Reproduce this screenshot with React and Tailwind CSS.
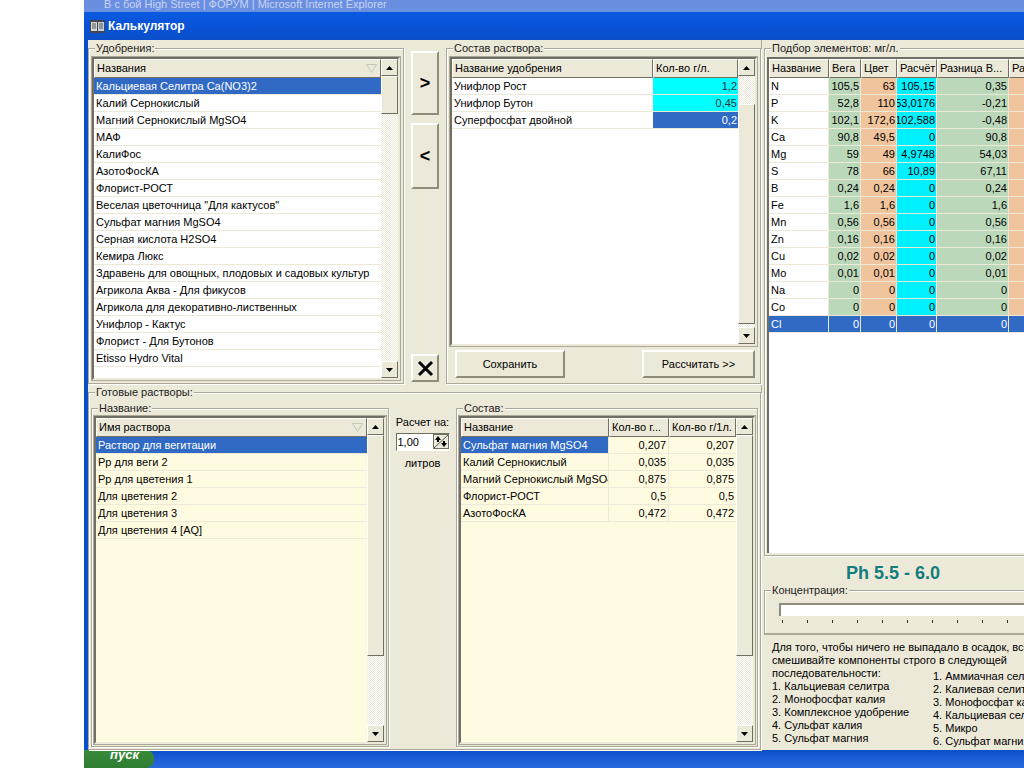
const F = { fontFamily: '"Liberation Sans", Arial, sans-serif' };

const up = (
  <svg width="7" height="4" viewBox="0 0 7 4"><path d="M3.5 0L7 4H0z" fill="#000" /></svg>
);
const down = (
  <svg width="7" height="4" viewBox="0 0 7 4"><path d="M0 0H7L3.5 4z" fill="#000" /></svg>
);

function ArrowBtn({ icon }) {
  return (
    <div className="w-[17px] h-[17px] shrink-0 bg-[#ece9d8] border border-t-white border-l-white border-r-[#716f64] border-b-[#716f64] flex items-center justify-center">
      {icon}
    </div>
  );
}

function Scrollbar({ thumbTop, thumbH, full }) {
  return (
    <div className="w-[17px] shrink-0 flex flex-col bg-[repeating-conic-gradient(#ece9d8_0%_25%,#ffffff_0%_50%)] bg-[length:2px_2px]">
      <ArrowBtn icon={up} />
      <div className="flex-1 min-h-0">
        <div style={{ height: thumbTop }} />
        <div
          style={{ height: thumbH }}
          className="bg-[#ece9d8] border border-t-white border-l-white border-r-[#716f64] border-b-[#716f64]"
        />
      </div>
      <ArrowBtn icon={down} />
    </div>
  );
}

function Group({ title, className, children }) {
  return (
    <div className={"relative border border-[#aca899] shadow-[inset_1px_1px_0_#fff,1px_1px_0_#fff] " + className}>
      <span className="absolute left-[6px] top-[-7px] bg-[#ece9d8] px-[1px] text-[11px] leading-[12px] text-[#222]">
        {title}
      </span>
      {children}
    </div>
  );
}

function Hdr({ children, className = "", sort }) {
  return (
    <div className={"h-[19px] shrink-0 flex items-center justify-between px-[2px] bg-[#ece9d8] border border-t-white border-l-white border-r-[#716f64] border-b-[#716f64] text-[11px] whitespace-nowrap overflow-hidden " + className}>
      <span>{children}</span>
      {sort && (
        <svg width="11" height="9" viewBox="0 0 11 9" className="mr-[1px]">
          <path d="M0.5 0.5H10.5L5.5 8.5z" fill="none" stroke="#c9c6b4" />
        </svg>
      )}
    </div>
  );
}

const fert = [
  "Кальциевая Селитра Ca(NO3)2", "Калий Сернокислый", "Магний Сернокислый MgSO4", "МАФ", "КалиФос", "АзотоФосКА",
  "Флорист-РОСТ", 'Веселая цветочница "Для кактусов"', "Сульфат магния MgSO4", "Серная кислота H2SO4", "Кемира Люкс",
  "Здравень для овощных, плодовых и садовых культур", "Агрикола Аква - Для фикусов", "Агрикола для декоративно-лиственных",
  "Унифлор - Кактус", "Флорист - Для Бутонов", "Etisso Hydro Vital",
];
const recipes = ["Раствор для вегитации", "Рр для веги 2", "Рр для цветения 1", "Для цветения 2", "Для цветения 3", "Для цветения 4 [AQ]"];
const comp = [
  ["Сульфат магния MgSO4", "0,207", "0,207"], ["Калий Сернокислый", "0,035", "0,035"], ["Магний Сернокислый MgSO4", "0,875", "0,875"],
  ["Флорист-РОСТ", "0,5", "0,5"], ["АзотоФосКА", "0,472", "0,472"],
];
const el = [
  ["N", "105,5", "63", "105,15", "0,35"], ["P", "52,8", "110", "53,0176", "-0,21"], ["K", "102,1", "172,6", "102,588", "-0,48"],
  ["Ca", "90,8", "49,5", "0", "90,8"], ["Mg", "59", "49", "4,9748", "54,03"], ["S", "78", "66", "10,89", "67,11"],
  ["B", "0,24", "0,24", "0", "0,24"], ["Fe", "1,6", "1,6", "0", "1,6"], ["Mn", "0,56", "0,56", "0", "0,56"], ["Zn", "0,16", "0,16", "0", "0,16"],
  ["Cu", "0,02", "0,02", "0", "0,02"], ["Mo", "0,01", "0,01", "0", "0,01"], ["Na", "0", "0", "0", "0"], ["Co", "0", "0", "0", "0"], ["Cl", "0", "0", "0", "0"],
];

const Sunken = ({ className = "", children }) => (
  <div className={"flex border-2 border-t-[#716f64] border-l-[#716f64] border-r-[#ece9d8] border-b-[#ece9d8] shadow-[0_0_0_1px_#aca899] overflow-hidden " + className}>
    {children}
  </div>
);

const Raised = ({ className = "", children }) => (
  <div className={"flex items-center justify-center bg-[#ece9d8] border-2 border-t-white border-l-white border-r-[#8f8c7c] border-b-[#8f8c7c] " + className}>
    {children}
  </div>
);

export default function App() {
  return (
    <div style={F} className="w-[1024px] h-[768px] overflow-hidden bg-white flex text-black">
      <div className="w-[84px] shrink-0" />
      <div className="w-[940px] shrink-0 flex flex-col">
        <div className="h-[12px] shrink-0 bg-[#6b8fe0] overflow-hidden text-[11px] leading-[8px] text-[#c8d4f4] pl-[20px] whitespace-nowrap">
          В с бой High Street | ФОРУМ | Microsoft Internet Explorer
        </div>
        <div className="h-[28px] shrink-0 bg-gradient-to-b from-[#0a5be0] via-[#0852d8] to-[#0a4fc8] flex items-center pl-[6px] gap-[3px] text-white font-bold text-[12px]">
          <svg width="15" height="13" viewBox="0 0 15 13">
            <rect width="15" height="13" fill="#44474e" />
            <rect x="1" y="2" width="6" height="9" fill="#d8d8d8" />
            <rect x="8" y="2" width="6" height="9" fill="#c8d0d8" />
            <path d="M2 4h4M2 6h4M2 8h4M9 4h4M9 6h4M9 8h4" stroke="#555" />
          </svg>
          <span>Калькулятор</span>
        </div>
        <div className="flex-1 min-h-0 flex bg-[#ece9d8] border-l-[4px] border-[#0a4fc8]">
          <div className="w-[674px] shrink-0 flex flex-col pt-[8px] border-r border-[#aca899]">
            {/* upper row */}
            <div className="h-[336px] shrink-0 flex">
              <Group title="Удобрения:" className="w-[316px] ml-[0px] shrink-0 p-[3px] pt-[8px] flex">
                <Sunken className="flex-1">
                  <div className="flex-1 min-w-0 bg-white flex flex-col">
                    <Hdr sort className="pl-[2px]">Названия</Hdr>
                    {fert.map((n, i) => (
                      <div key={n} className={"h-[17px] shrink-0 flex items-center pl-[2px] text-[11px] whitespace-nowrap overflow-hidden border-b border-[#ece9d8] " + (i === 0 ? "bg-[#316ac5] text-white" : "")}>
                        {n}
                      </div>
                    ))}
                  </div>
                  <Scrollbar thumbTop={0} thumbH={38} />
                </Sunken>
              </Group>
              <div className="w-[42px] shrink-0 flex flex-col items-center pt-[3px]">
                <Raised className="w-[28px] h-[64px] text-[18px] font-bold">&gt;</Raised>
                <Raised className="w-[28px] h-[66px] mt-[8px] text-[18px] font-bold">&lt;</Raised>
                <div className="flex-1" />
                <Raised className="w-[28px] h-[28px] mb-[2px]">
                  <svg width="17" height="17" viewBox="0 0 17 17"><path d="M2 2L15 15M15 2L2 15" stroke="#000" strokeWidth="3" /></svg>
                </Raised>
              </div>
              <Group title="Состав раствора:" className="flex-1 min-w-0 p-[3px] pt-[8px] flex flex-col">
                <Sunken className="h-[289px] shrink-0">
                  <div className="flex-1 min-w-0 bg-white flex flex-col">
                    <div className="flex shrink-0">
                      <Hdr className="w-[201px]">Название удобрения</Hdr>
                      <Hdr className="flex-1 min-w-0">Кол-во г/л.</Hdr>
                    </div>
                    {[["Унифлор Рост", "1,2"], ["Унифлор Бутон", "0,45"], ["Суперфосфат двойной", "0,2"]].map(([a, b], i) => (
                      <div key={a} className="flex h-[17px] shrink-0 text-[11px] border-b border-[#ece9d8]">
                        <div className="w-[201px] pl-[2px] flex items-center">{a}</div>
                        <div className={"flex-1 flex items-center justify-end pr-[1px] " + (i === 2 ? "bg-[#316ac5] text-white" : "bg-[#00ffff] text-[#333]")}>{b}</div>
                      </div>
                    ))}
                  </div>
                  <Scrollbar thumbTop={28} thumbH={220} />
                </Sunken>
                <div className="flex justify-between mt-[4px] pl-[5px] pr-[2px]">
                  <Raised className="w-[110px] h-[28px] text-[11px]">Сохранить</Raised>
                  <Raised className="w-[113px] h-[28px] text-[11px]">Рассчитать &gt;&gt;</Raised>
                </div>
              </Group>
            </div>
            {/* lower */}
            <Group title="Готовые растворы:" className="h-[358px] mt-[8px] shrink-0 flex px-[2px] pt-[15px] pb-[2px]">
              <Group title="Название:" className="w-[298px] shrink-0 p-[2px] pt-[7px] flex">
                <Sunken className="flex-1">
                  <div className="flex-1 min-w-0 bg-[#fffbe0] flex flex-col">
                    <Hdr sort>Имя раствора</Hdr>
                    {recipes.map((n, i) => (
                      <div key={n} className={"h-[17px] shrink-0 flex items-center pl-[2px] text-[11px] border-b border-[#ece9d8] " + (i === 0 ? "bg-[#316ac5] text-white" : "")}>
                        {n}
                      </div>
                    ))}
                  </div>
                  <Scrollbar thumbTop={0} thumbH={221} />
                </Sunken>
              </Group>
              <div className="w-[67px] shrink-0 flex flex-col items-center pt-[8px] text-[11px]">
                <span className="leading-[13px]">Расчет на:</span>
                <div className="mt-[4px] w-[54px] h-[18px] flex bg-white border border-t-[#716f64] border-l-[#716f64] border-r-white border-b-white">
                  <span className="flex-1 pl-[1px] leading-[16px]">1,00</span>
                  <div className="w-[16px] h-[15px] bg-[#ece9d8] border border-[#716f64] flex items-center justify-center">
                    <svg width="14" height="13" viewBox="0 0 14 13">
                      <path d="M0 13L14 0" stroke="#555" />
                      <path d="M4 1L7 5H5V7H3V5H1zM10 12L7 8H9V6H11V8H13z" fill="#000" />
                    </svg>
                  </div>
                </div>
                <span className="mt-[6px] leading-[13px]">литров</span>
              </div>
              <Group title="Состав:" className="w-[302px] shrink-0 p-[2px] pt-[7px] flex">
                <Sunken className="flex-1">
                  <div className="flex-1 min-w-0 bg-[#fffbe0] flex flex-col">
                    <div className="flex shrink-0">
                      <Hdr className="w-[148px]">Название</Hdr>
                      <Hdr className="w-[60px]">Кол-во г...</Hdr>
                      <Hdr className="flex-1 min-w-0">Кол-во г/1л.</Hdr>
                    </div>
                    {comp.map(([a, b, c], i) => (
                      <div key={a} className="flex h-[17px] shrink-0 text-[11px] border-b border-[#ece9d8]">
                        <div className={"w-[148px] pl-[2px] flex items-center whitespace-nowrap overflow-hidden border-r border-[#ece9d8] " + (i === 0 ? "bg-[#316ac5] text-white" : "")}>{a}</div>
                        <div className="w-[60px] pr-[2px] flex items-center justify-end border-r border-[#ece9d8]">{b}</div>
                        <div className="flex-1 pr-[2px] flex items-center justify-end">{c}</div>
                      </div>
                    ))}
                  </div>
                  <Scrollbar thumbTop={0} thumbH={221} />
                </Sunken>
              </Group>
            </Group>
          </div>
          {/* right */}
          <div className="w-[262px] shrink-0 flex flex-col pt-[8px] pl-[2px] overflow-hidden">
            <Group title="Подбор элементов: мг/л." className="h-[508px] shrink-0 w-[300px] p-[2px] pt-[8px] flex">
              <div className="flex-1 bg-white flex flex-col border-l-2 border-t-2 border-[#716f64]">
                <div className="flex shrink-0">
                  {[["Название", 60], ["Вега", 32], ["Цвет", 36], ["Расчёт", 40], ["Разница В...", 72], ["Разн", 60]].map(([h, w]) => (
                    <div key={h} style={{ width: w }}><Hdr>{h}</Hdr></div>
                  ))}
                </div>
                {el.map((r, i) => {
                  const sel = i === 14;
                  const cols = [
                    [60, "bg-white justify-start pl-[2px]"], [32, "bg-[#bbd8bb] justify-end pr-[1px]"], [36, "bg-[#f0c49c] justify-end pr-[1px]"],
                    [40, "bg-[#00f0ff] justify-end pr-[1px]"], [72, "bg-[#bbd8bb] justify-end pr-[1px]"],
                  ];
                  return (
                    <div key={r[0]} className={"flex h-[17px] shrink-0 text-[11px] border-b border-[#ece9d8] " + (sel ? "bg-[#316ac5] text-white" : "")}>
                      {cols.map(([w, c], j) => (
                        <div key={j} style={{ width: w }} className={"flex items-center overflow-hidden whitespace-nowrap border-r border-[#ece9d8] " + (sel ? "justify-" + (j === 0 ? "start pl-[2px]" : "end pr-[1px]") : c)}>
                          {r[j]}
                        </div>
                      ))}
                      <div className={"w-[60px] " + (sel ? "" : "bg-[#f0c49c]")} />
                    </div>
                  );
                })}
              </div>
            </Group>
            <div className="h-[34px] shrink-0 flex items-center justify-center text-[18px] font-bold text-[#127d7d] pr-[2px]">Ph 5.5 - 6.0</div>
            <Group title="Концентрация:" className="h-[44px] shrink-0 w-[300px] pt-[12px] pl-[14px]">
              <div className="h-[13px] bg-white border-l-2 border-t-2 border-[#8f8c7c]" />
              <div className="flex gap-[24px] pl-[3px] mt-[4px]">
                {Array.from({ length: 12 }).map((_, i) => (
                  <div key={i} className="w-[1px] h-[3px] bg-[#333]" />
                ))}
              </div>
            </Group>
            <div className="flex-1 min-h-0 relative text-[11px] leading-[13px] pl-[8px] pt-[6px] whitespace-nowrap border-t border-[#aca899]">
              <div>Для того, чтобы ничего не выпадало в осадок, всегда</div>
              <div>смешивайте компоненты строго в следующей</div>
              <div className="flex">
                <div className="w-[161px] shrink-0">
                  <div>последовательности:</div>
                  <div>1. Кальциевая селитра</div>
                  <div>2. Монофосфат калия</div>
                  <div>3. Комплексное удобрение</div>
                  <div>4. Сульфат калия</div>
                  <div>5. Сульфат магния</div>
                </div>
                <div className="pt-[3px]">
                  <div>1. Аммиачная селитра</div>
                  <div>2. Калиевая селитра</div>
                  <div>3. Монофосфат калия</div>
                  <div>4. Кальциевая селитра</div>
                  <div>5. Микро</div>
                  <div>6. Сульфат магния</div>
                </div>
              </div>
            </div>
          </div>
        </div>
        <div className="h-[18px] shrink-0 flex bg-gradient-to-b from-[#0a4fc8] to-[#2a6adf]">
          <div className="w-[70px] bg-gradient-to-b from-[#3a8a3a] to-[#2e7d32] rounded-r-[8px] text-white font-bold text-[13px] italic pl-[26px] leading-[10px]">пуск</div>
        </div>
      </div>
    </div>
  );
}
